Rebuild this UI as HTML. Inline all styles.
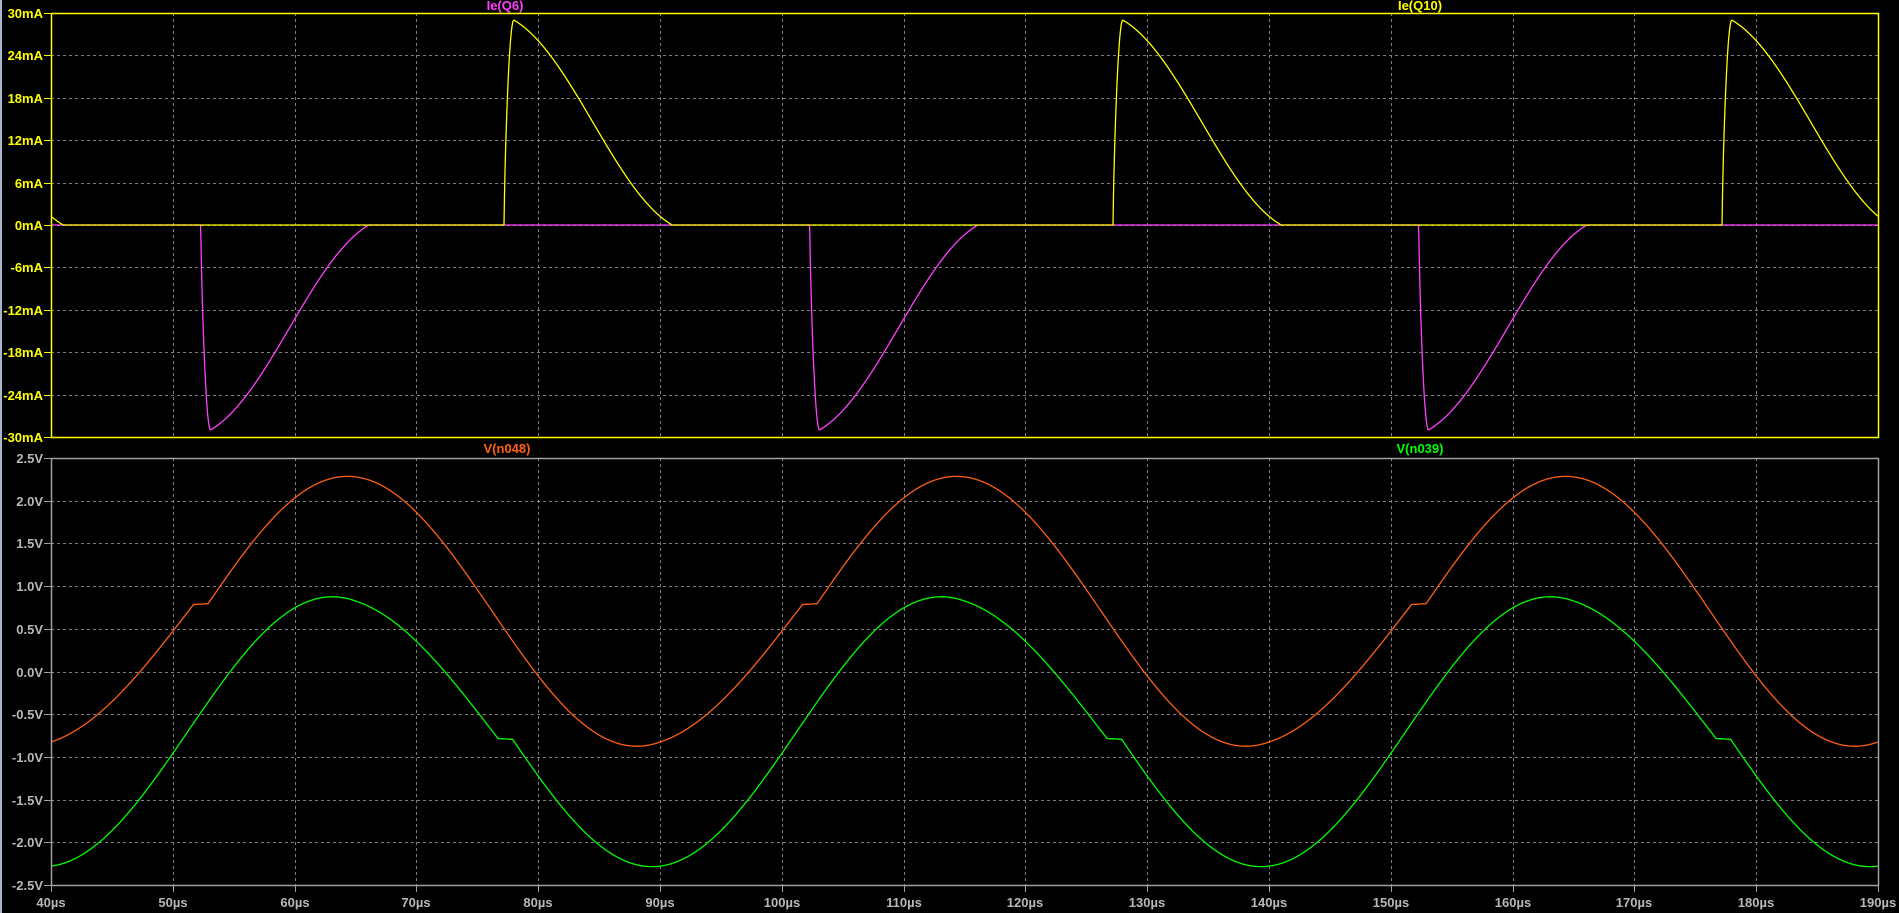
<!DOCTYPE html>
<html><head><meta charset="utf-8"><style>
html,body{margin:0;padding:0;background:#000;width:1899px;height:913px;overflow:hidden}
svg{display:block}
text{font-family:"Liberation Sans",sans-serif;font-weight:bold;font-size:13px}
</style></head><body>
<svg id="s" width="1899" height="913" xmlns="http://www.w3.org/2000/svg">
<rect width="1899" height="913" fill="#000"/>
<rect x="0" y="0" width="2" height="913" fill="#a8b4c8"/>
<g id="grid" stroke="#808080" stroke-width="1" stroke-dasharray="3,3" fill="none"></g>
<g id="traces" fill="none" stroke-width="1.3"></g>
<g id="frame"></g>
<g id="labels"></g>
<text x="505" y="10" fill="#ff40ff" text-anchor="middle">Ie(Q6)</text>
<text x="1420" y="10" fill="#ffff00" text-anchor="middle">Ie(Q10)</text>
<text x="507" y="453" fill="#ff6010" text-anchor="middle">V(n048)</text>
<text x="1420" y="453" fill="#00ff00" text-anchor="middle">V(n039)</text>
</svg>
<script>
var NS="http://www.w3.org/2000/svg";
function el(p,n,a,t){var e=document.createElementNS(NS,n);for(var k in a)e.setAttribute(k,a[k]);if(t!=null)e.textContent=t;document.getElementById(p).appendChild(e);return e;}
var X0=51,X1=1878,T0=13,T1=437,B0=458,B1=885;
var dx=(X1-X0)/15;
for(var k=1;k<15;k++){var x=Math.round(X0+k*dx)+.5;
 el("grid","line",{x1:x,y1:T0,x2:x,y2:T1});el("grid","line",{x1:x,y1:B0,x2:x,y2:B1});}
for(var k=1;k<10;k++){var y=Math.round(T0+k*(T1-T0)/10)+.5;el("grid","line",{x1:X0,y1:y,x2:X1,y2:y});
 var y2=Math.round(B0+k*(B1-B0)/10)+.5;el("grid","line",{x1:X0,y1:y2,x2:X1,y2:y2});}
el("frame","rect",{x:X0+.5,y:T0+.5,width:X1-X0,height:T1-T0,fill:"none",stroke:"#ffff00","stroke-width":1.5});
el("frame","rect",{x:X0+.5,y:B0+.5,width:X1-X0,height:B1-B0,fill:"none",stroke:"#a0a0a0","stroke-width":1.5});
var tl=["30mA","24mA","18mA","12mA","6mA","0mA","-6mA","-12mA","-18mA","-24mA","-30mA"];
for(var k=0;k<11;k++){var y=Math.round(T0+k*(T1-T0)/10);
 el("labels","line",{x1:44,y1:y+.5,x2:X0,y2:y+.5,stroke:"#ffff00"});
 el("labels","text",{x:43,y:y+5,fill:"#ffff00","text-anchor":"end"},tl[k]);}
var bl=["2.5V","2.0V","1.5V","1.0V","0.5V","0.0V","-0.5V","-1.0V","-1.5V","-2.0V","-2.5V"];
for(var k=0;k<11;k++){var y=Math.round(B0+k*(B1-B0)/10);
 el("labels","line",{x1:44,y1:y+.5,x2:X0,y2:y+.5,stroke:"#a0a0a0"});
 el("labels","text",{x:43,y:y+5,fill:"#b8b8b8","text-anchor":"end"},bl[k]);}
for(var k=0;k<16;k++){var x=Math.round(X0+k*dx);
 el("labels","line",{x1:x+.5,y1:B1,x2:x+.5,y2:B1+7,stroke:"#a0a0a0"});
 el("labels","text",{x:x,y:907,fill:"#b8b8b8","text-anchor":"middle"},(40+10*k)+"\u00b5s");}
var MP=[[0,0],[11.7,10.9],[12.9,10.95],[50,50]];
function warp(p){for(var i=1;i<MP.length;i++){if(p<=MP[i][0]){var a=MP[i-1],b=MP[i];return a[1]+(p-a[0])*(b[1]-a[1])/(b[0]-a[0]);}}return p;}
function orange(t){var p=((t-40)%50+50)%50;var q=warp(p);
 return 0.705+1.58*Math.cos(2*Math.PI*(q+40-63)/50);}
function green(t){return -orange(t-25);}
function mag(t){var p=((t-40)%50+50)%50;var a=12.3,b=13.1,c=26.1;
 if(p<a||p>c)return 0;
 if(p<b){var s=(p-a)/(b-a);return -29*Math.pow(Math.sin(s*Math.PI/2),0.7);}
 var s=(p-b)/(c-b);var f=0.45*(1-s)+0.55*(1+Math.cos(Math.PI*s))/2;return -29*f;}
function yel(t){return -mag(t-24.9);}
function path(fn,yf,col){var d="";for(var px=X0;px<=X1;px+=0.5){var t=40+(px-X0)*150/(X1-X0);
 d+=(d?"L":"M")+px.toFixed(1)+","+yf(fn(t)).toFixed(1);}
 el("traces","path",{d:d,stroke:col});}
var yi=function(i){return T0+(30-i)/60*(T1-T0);};
var yv=function(v){return B0+(2.5-v)/5*(B1-B0);};
path(mag,yi,"#ff40ff");path(yel,yi,"#ffff00");
path(orange,yv,"#ff6010");path(green,yv,"#00ff00");
</script>
</body></html>
